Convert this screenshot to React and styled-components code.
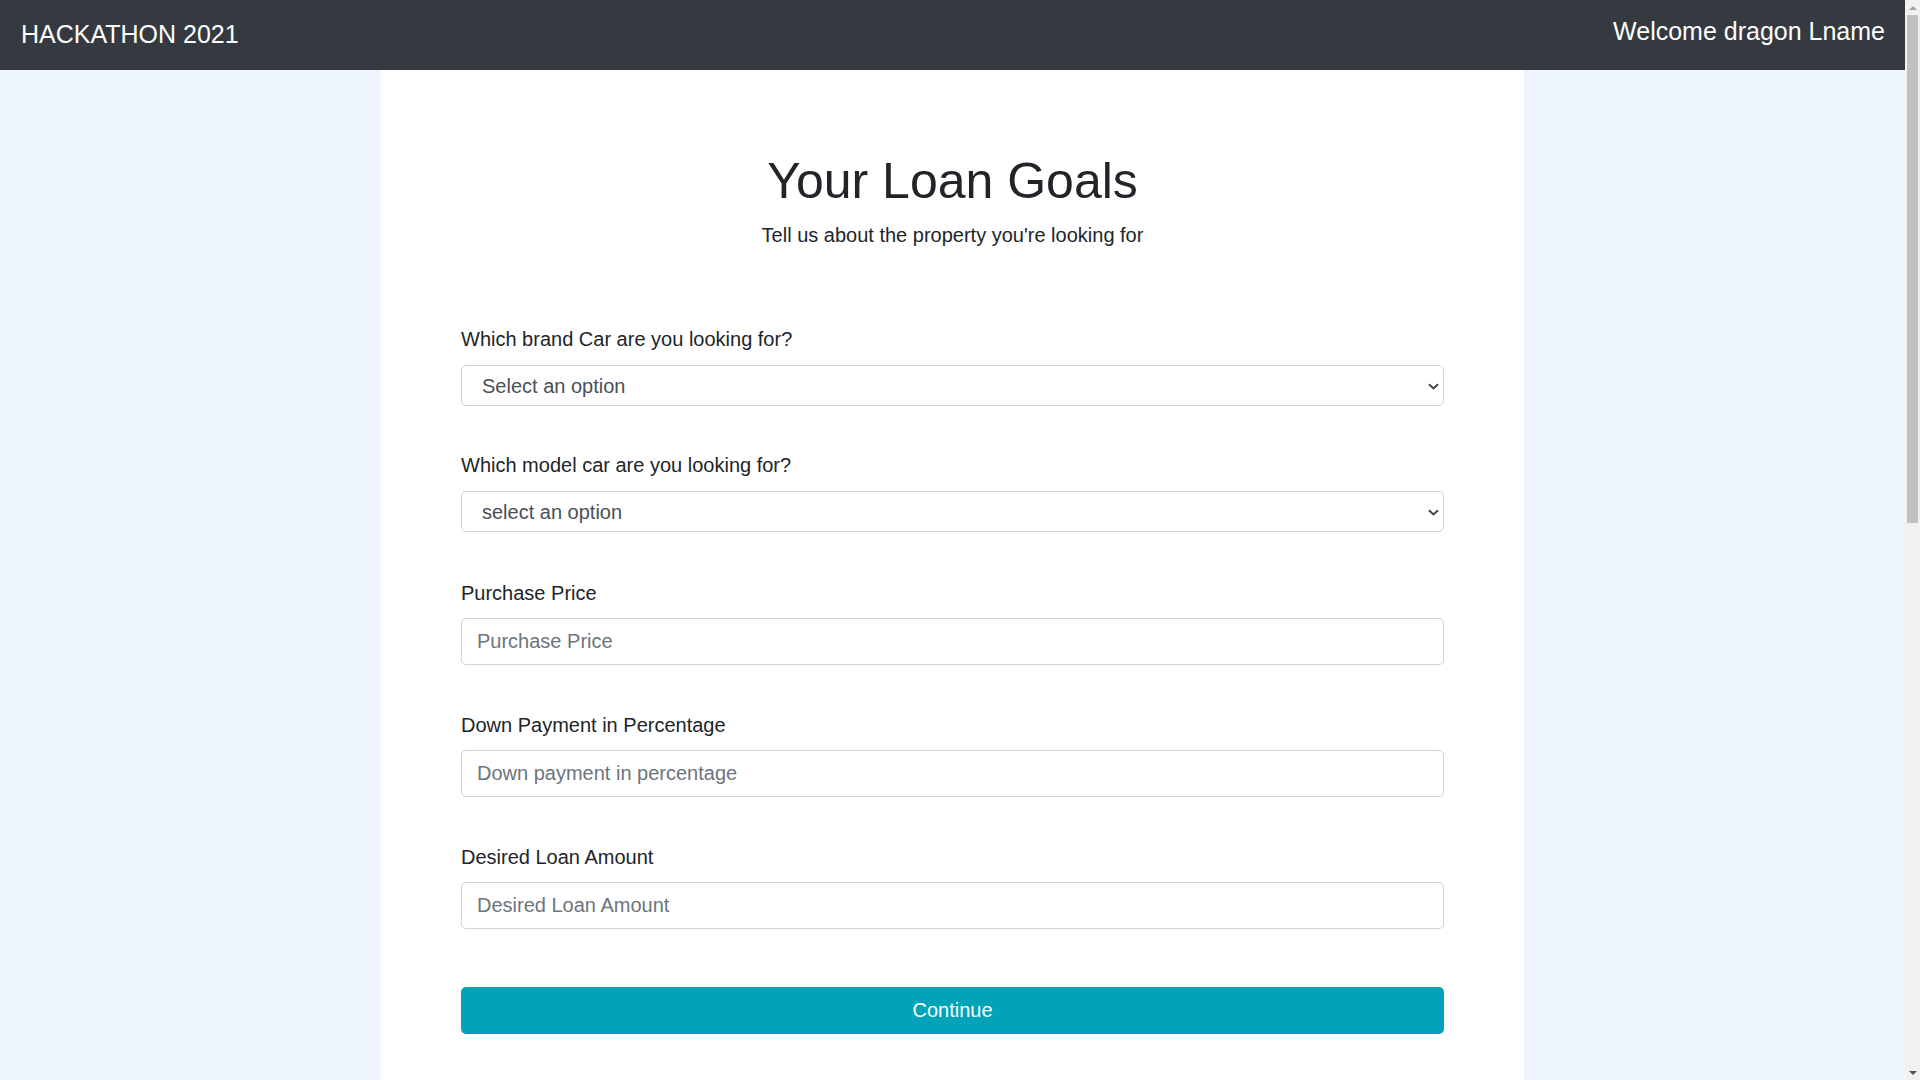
import React from "react";
import styled, { createGlobalStyle } from "styled-components";

const GlobalStyle = createGlobalStyle`
  html, body { margin: 0; padding: 0; height: 100%; overflow: hidden; }
  body {
    background: #eff6ff;
    font-family: "Liberation Sans", Arial, sans-serif;
    color: #212529;
  }
  * { box-sizing: border-box; }
`;

const Frame = styled.div`
  display: flex;
  height: 100vh;
`;

const Viewport = styled.div`
  flex: 1;
  min-width: 0;
  height: 100%;
  overflow-y: auto;
  background: #eff6ff;
  scrollbar-width: none;
  &::-webkit-scrollbar { display: none; }
`;

const ScrollBar = styled.div`
  width: 15px;
  flex: none;
  display: flex;
  flex-direction: column;
  background: #f1f1f1;
`;

const ArrowBox = styled.div`
  height: 15px;
  display: flex;
  align-items: center;
  justify-content: center;
`;

const Track = styled.div`
  flex: 1;
  padding: 0 2px;
`;

const Thumb = styled.div`
  height: 508px;
  background: #c1c1c1;
`;

const NavBar = styled.header`
  height: 70px;
  background: #343a40;
  display: flex;
  align-items: center;
  justify-content: space-between;
  padding: 0 20px 0 21px;
  color: #fff;
`;

const Brand = styled.div`
  font-size: 25px;
  line-height: 1;
  margin-top: -1px;
`;

const Welcome = styled.div`
  font-size: 25px;
  line-height: 1;
  margin-top: -8px;
`;

const Panel = styled.main`
  width: 60%;
  margin: 0 auto;
  background: #fff;
  min-height: 2160px;
  padding: 81px 80px 0;
`;

const Title = styled.h1`
  margin: 0;
  text-align: center;
  font-size: 50px;
  font-weight: 400;
  line-height: 1.2;
`;

const Lead = styled.p`
  margin: 9px 0 0;
  text-align: center;
  font-size: 20px;
  line-height: 30px;
`;

const Form = styled.form`
  display: flex;
  flex-direction: column;
  margin-top: 74px;
`;

const Group = styled.div`
  display: flex;
  flex-direction: column;
  margin-bottom: ${(p) => p.$gap || 45}px;
`;

const Label = styled.label`
  font-size: 20px;
  line-height: 30px;
  margin-bottom: ${(p) => p.$mb || 11}px;
`;

const SelectWrap = styled.div`
  position: relative;
  height: 41px;
`;

const Select = styled.select`
  appearance: none;
  -webkit-appearance: none;
  height: 41px;
  width: 100%;
  font-family: "Liberation Sans", Arial, sans-serif;
  font-size: 20px;
  color: #495057;
  background: #fff;
  border: 1px solid #ced4da;
  border-radius: 5px;
  padding: 0 24px 0 20px;
  outline: none;
`;

const Chevron = styled.svg`
  position: absolute;
  right: 5px;
  top: 50%;
  width: 11px;
  height: 7px;
  margin-top: -3px;
  pointer-events: none;
`;

const Input = styled.input`
  height: 47px;
  width: 100%;
  font-family: "Liberation Sans", Arial, sans-serif;
  font-size: 20px;
  color: #495057;
  background: #fff;
  border: 1px solid #ced4da;
  border-radius: 5px;
  padding: 0 15px;
  outline: none;
  &::placeholder { color: #6c757d; }
`;

const Button = styled.button`
  height: 47px;
  width: 100%;
  margin-top: 13px;
  background: #00a3b8;
  color: #fff;
  border: none;
  border-radius: 5px;
  font-family: "Liberation Sans", Arial, sans-serif;
  font-size: 20px;
  cursor: pointer;
`;

function DropDown({ placeholder }) {
  return (
    <SelectWrap>
      <Select defaultValue="">
        <option value="">{placeholder}</option>
      </Select>
      <Chevron viewBox="0 0 11 7">
        <path d="M1 1.2 L5.5 5.5 L10 1.2" fill="none" stroke="#3f454b" strokeWidth="1.9" />
      </Chevron>
    </SelectWrap>
  );
}

export default function App() {
  return (
    <>
      <GlobalStyle />
      <Frame>
        <Viewport>
          <NavBar>
            <Brand>HACKATHON 2021</Brand>
            <Welcome>Welcome dragon Lname</Welcome>
          </NavBar>
          <Panel>
            <Title>Your Loan Goals</Title>
            <Lead>Tell us about the property you're looking for</Lead>
            <Form onSubmit={(e) => e.preventDefault()}>
              <Group $gap={44}>
                <Label>Which brand Car are you looking for?</Label>
                <DropDown placeholder="Select an option" />
              </Group>
              <Group $gap={46}>
                <Label>Which model car are you looking for?</Label>
                <DropDown placeholder="select an option" />
              </Group>
              <Group>
                <Label $mb={10}>Purchase Price</Label>
                <Input placeholder="Purchase Price" />
              </Group>
              <Group>
                <Label $mb={10}>Down Payment in Percentage</Label>
                <Input placeholder="Down payment in percentage" />
              </Group>
              <Group>
                <Label $mb={10}>Desired Loan Amount</Label>
                <Input placeholder="Desired Loan Amount" />
              </Group>
              <Button type="submit">Continue</Button>
            </Form>
          </Panel>
        </Viewport>
        <ScrollBar aria-hidden="true">
          <ArrowBox>
            <svg width="8" height="4" viewBox="0 0 8 4">
              <path d="M0 4 L4 0 L8 4 Z" fill="#a3a3a3" />
            </svg>
          </ArrowBox>
          <Track>
            <Thumb />
          </Track>
          <ArrowBox>
            <svg width="8" height="4" viewBox="0 0 8 4">
              <path d="M0 0 L8 0 L4 4 Z" fill="#505050" />
            </svg>
          </ArrowBox>
        </ScrollBar>
      </Frame>
    </>
  );
}
